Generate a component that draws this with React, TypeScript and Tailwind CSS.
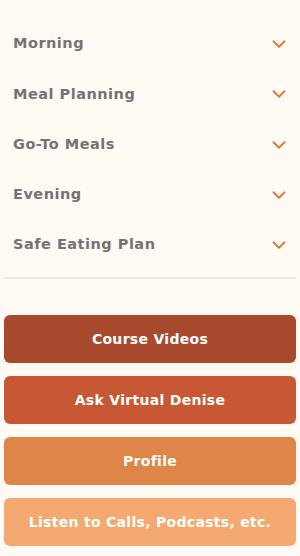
import React from 'react';
import { ChevronDown } from 'lucide-react';

const sections = ['Morning', 'Meal Planning', 'Go-To Meals', 'Evening', 'Safe Eating Plan'];

const links = [
  { label: 'Course Videos', cls: 'bg-[#a84a2e]' },
  { label: 'Ask Virtual Denise', cls: 'bg-[#c85833]' },
  { label: 'Profile', cls: 'bg-[#de8548]' },
  { label: 'Listen to Calls, Podcasts, etc.', cls: 'bg-[#f4a970]' },
];

export default function App() {
  return (
    <div
      className="min-h-[556px] w-[300px] bg-[#fffaf4] px-1 pt-[19px]"
      style={{ fontFamily: '"DejaVu Sans", "Open Sans", sans-serif' }}
    >
      {/* Accordion sections */}
      <div className="border-b-2 border-[#f3e9d9] pb-[7px]">
        {sections.map((s) => (
          <button
            key={s}
            className="flex h-[50.25px] w-full items-center justify-between pl-[9px] pr-[6px] text-left"
          >
            <span className="text-[14.5px] font-semibold tracking-[0.5px] text-[#737373]">{s}</span>
            <ChevronDown className="h-[22px] w-[22px] text-[#d9783a]" strokeWidth={2} />
          </button>
        ))}
      </div>

      {/* Quick links */}
      <div className="mt-[36px] flex flex-col gap-[13px]">
        {links.map((l) => (
          <button
            key={l.label}
            className={`flex h-[48px] w-full items-center justify-center rounded-md text-[14px] font-bold tracking-[0.3px] text-white ${l.cls}`}
          >
            {l.label}
          </button>
        ))}
      </div>
    </div>
  );
}
